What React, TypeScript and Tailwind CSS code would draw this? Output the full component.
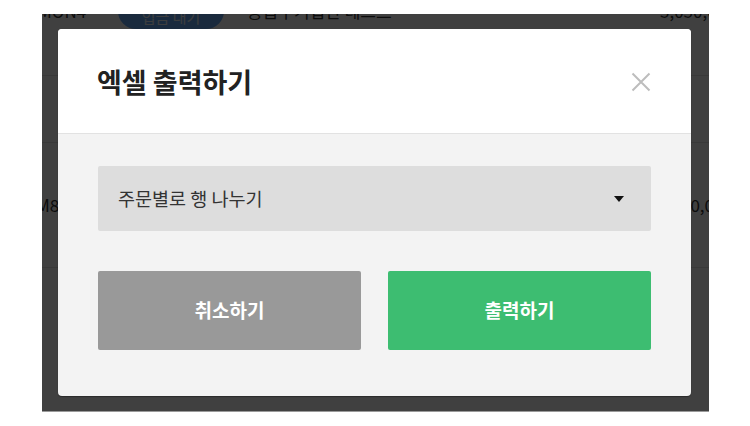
import React from "react";

const font = { fontFamily: '"Noto Sans CJK KR", "Noto Sans", sans-serif' };

export default function App() {
  return (
    <div className="w-[750px] h-[426px] bg-white pt-[14px] pl-[42px]" style={font}>
      <div className="relative w-[667px] h-[398px] overflow-hidden bg-white border-b border-[#9a9a9a]">
        {/* underlying page content */}
        <div className="-mt-[68px] w-[720px] text-[17px] text-[#333]">
          <div className="h-[130px] flex items-center border-b border-[#e4e4e4]">
            <span className="-ml-[4px] w-[80px]">MON4</span>
            <span className="w-[106px] h-[36px] rounded-full bg-[#68a8f2] text-[#eef3f8] text-[15px] flex items-center justify-center pt-[14px]">
              입금 대기
            </span>
            <span className="ml-[23px] w-[413px]">공급주기입관 테스트</span>
            <span className="w-[100px] text-left">5,050,000</span>
          </div>
          <div className="h-[67px] border-b border-[#e4e4e4]" />
          <div className="h-[125px] flex items-center border-b border-[#e4e4e4]">
            <span className="-ml-[6px] w-[600px]">M8</span>
            <span className="ml-[45px]">30,000</span>
          </div>
          <div className="h-[120px]" />
        </div>

        {/* overlay */}
        <div className="absolute inset-0 bg-black/75" />

        {/* modal */}
        <div className="absolute left-[16px] top-[15px] w-[633px] rounded-[4px] overflow-hidden bg-[#f3f3f3] shadow-[0_1px_1px_rgba(0,0,0,0.35)]">
          <div className="h-[105px] bg-white border-b border-[#e2e2e2] px-[40px] flex items-center justify-between">
            <h2 className="text-[27px] font-bold text-[#222] leading-none -ml-[1px]">엑셀 출력하기</h2>
            <svg width="20" height="20" viewBox="0 0 20 20" className="mt-[1px]">
              <path d="M1.5 1.5 L18.5 18.5 M18.5 1.5 L1.5 18.5" stroke="#bdbdbd" strokeWidth="2" />
            </svg>
          </div>
          <div className="px-[40px] pt-[32px] pb-[46px]">
            <div className="h-[65px] bg-[#dddddd] rounded-[2px] flex items-center justify-between pl-[20px] pr-[27px]">
              <span className="text-[18.5px] text-[#333]">주문별로 행 나누기</span>
              <svg width="10" height="6" viewBox="0 0 10 6" className="mt-[1px]">
                <polygon points="0,0 10,0 5,6" fill="#111" />
              </svg>
            </div>
            <div className="mt-[40px] flex gap-[27px]">
              <button className="w-[263px] h-[79px] rounded-[2px] bg-[#999999] text-white text-[19px] font-bold flex items-center justify-center">
                취소하기
              </button>
              <button className="w-[263px] h-[79px] rounded-[2px] bg-[#3dbd71] text-white text-[19px] font-bold flex items-center justify-center">
                출력하기
              </button>
            </div>
          </div>
        </div>
      </div>
    </div>
  );
}
